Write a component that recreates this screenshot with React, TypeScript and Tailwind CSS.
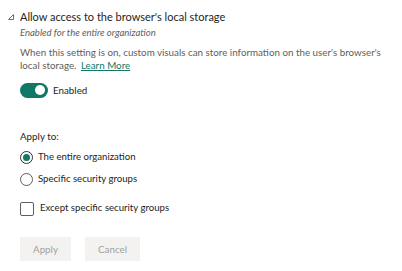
import React from "react";

export default function App() {
  const font = { fontFamily: 'Lato, "Noto Sans", sans-serif' };
  return (
    <div className="w-[402px] h-[271px] bg-white overflow-hidden" style={font}>
      <div className="flex flex-col pl-[20px] pt-[8px] relative">
        <svg className="absolute left-[8px] top-[14px]" width="6" height="6" viewBox="0 0 6 6">
          <polygon points="5.5,0.5 5.5,5.5 0.5,5.5" fill="none" stroke="#605e5c" strokeWidth="0.9" strokeLinejoin="round" />
        </svg>
        <div className="text-[11px] leading-[17px] text-[#252423]">Allow access to the browser's local storage</div>
        <div className="text-[9.5px] leading-[15px] italic text-[#605e5c]">Enabled for the entire organization</div>
        <div className="text-[9.8px] leading-[12.5px] text-[#605e5c] mt-[6px] w-[368px]">
          When this setting is on, custom visuals can store information on the user's browser's local storage.{" "}
          <span className="underline text-[#117865] ml-[2px]">Learn More</span>
        </div>
        <div className="flex items-center mt-[11px] h-[16px]">
          <div className="w-[28px] h-[15px] rounded-full bg-[#117865] flex items-center justify-end pr-[3px]">
            <div className="w-[10px] h-[10px] rounded-full bg-white" />
          </div>
          <span className="ml-[5px] text-[9.8px] text-[#252423]">Enabled</span>
        </div>
        <div className="text-[9.8px] text-[#252423] mt-[31px] leading-[15px]">Apply to:</div>
        <div className="flex items-center mt-[6px] h-[14px]">
          <div className="w-[13px] h-[13px] rounded-full border border-[#323130] flex items-center justify-center">
            <div className="w-[7px] h-[7px] rounded-full bg-[#117865]" />
          </div>
          <span className="ml-[5px] text-[9.6px] text-[#252423]">The entire organization</span>
        </div>
        <div className="flex items-center mt-[8px] h-[14px]">
          <div className="w-[13px] h-[13px] rounded-full border border-[#605e5c]" />
          <span className="ml-[5px] text-[9.6px] text-[#252423]">Specific security groups</span>
        </div>
        <div className="flex items-center mt-[15px] h-[15px]">
          <div className="w-[14px] h-[14px] rounded-[2px] border border-[#605e5c]" />
          <span className="ml-[6px] text-[9.6px] text-[#252423]">Except specific security groups</span>
        </div>
        <div className="flex mt-[21px] gap-[14px]">
          <div className="w-[51px] h-[24px] bg-[#f3f2f1] text-[#a19f9d] text-[9.8px] flex items-center justify-center">Apply</div>
          <div className="w-[55px] h-[24px] bg-[#f3f2f1] text-[#a19f9d] text-[9.8px] flex items-center justify-center">Cancel</div>
        </div>
      </div>
    </div>
  );
}
